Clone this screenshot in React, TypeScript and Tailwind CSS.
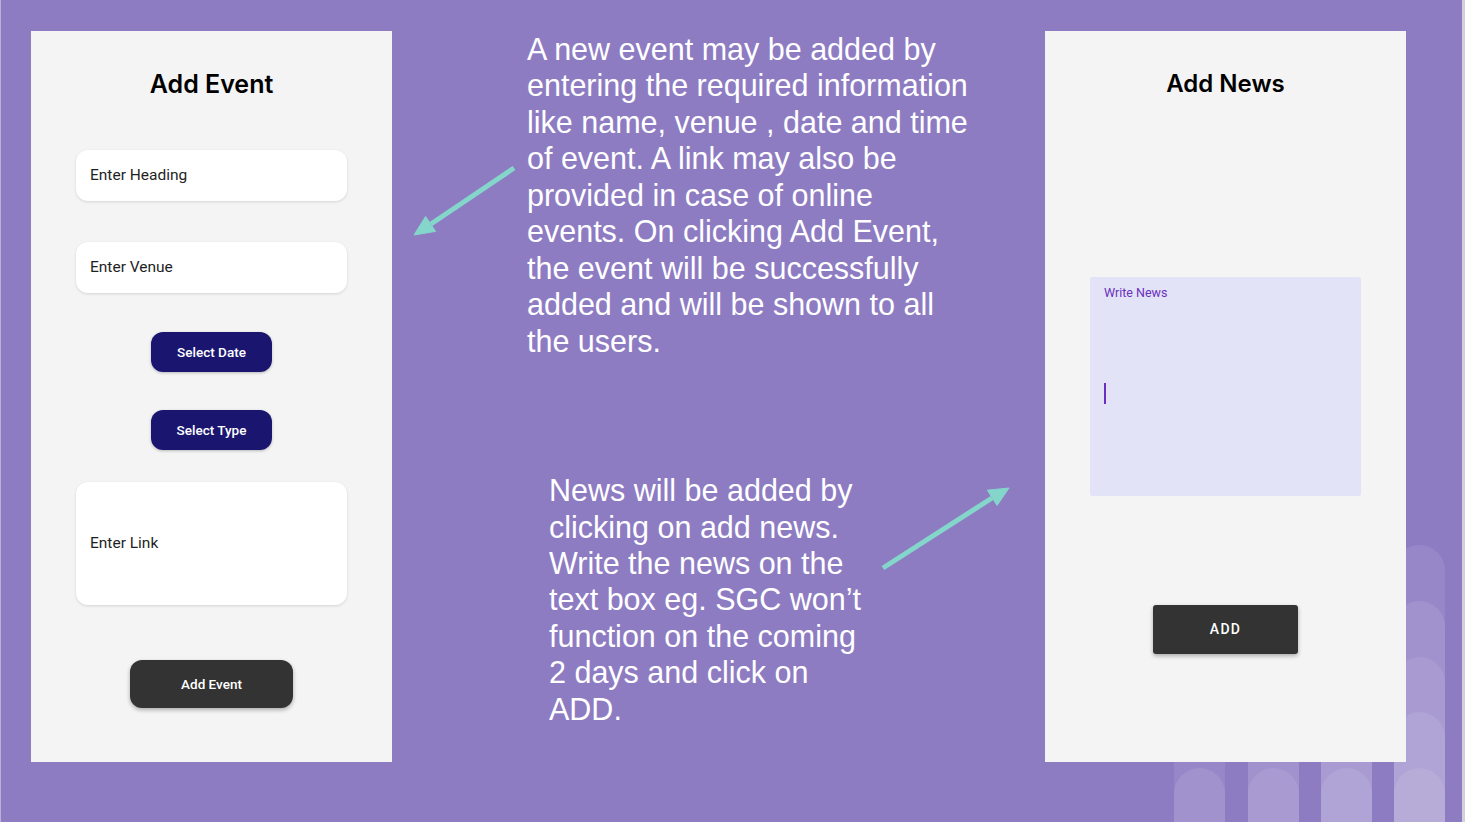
import React from 'react';

const fontUi = { fontFamily: 'Roboto, "Liberation Sans", sans-serif' };

const Field: React.FC<{ label: string; tall?: boolean; className?: string }> = ({ label, tall, className }) => (
  <div
    className={`w-[271px] ${tall ? 'h-[123px]' : 'h-[51px]'} bg-white rounded-[12px] shadow-[0_1px_3px_rgba(0,0,0,0.13)] flex items-center px-[14px] text-[15.5px] text-[#1f1f1f] ${className ?? ''}`}
  >
    {label}
  </div>
);

const NavyButton: React.FC<{ label: string; className?: string }> = ({ label, className }) => (
  <button
    className={`w-[121px] h-[40px] rounded-[12px] bg-[#1a1670] text-white text-[13.5px] font-medium shadow-[0_1px_3px_rgba(0,0,0,0.25)] ${className ?? ''}`}
  >
    {label}
  </button>
);

// decorative stacked pills bottom right, each layer a bit lighter
const Column: React.FC<{ left: number; tops: number[] }> = ({ left, tops }) => (
  <div className="absolute bottom-0" style={{ left, width: 51, top: tops[0] }}>
    {tops.map((t, i) => (
      <div
        key={i}
        className="absolute left-0 right-0 bottom-0 rounded-t-full bg-white/[0.09]"
        style={{ top: t - tops[0] }}
      />
    ))}
  </div>
);

const Arrows: React.FC = () => (
  <svg className="absolute inset-0 pointer-events-none" width="1465" height="822" viewBox="0 0 1465 822">
    <g fill="#84d6cb" stroke="#84d6cb">
      <line x1="513" y1="168" x2="430" y2="224" strokeWidth="5" />
      <polygon points="413,235 434.6,231.4 424.6,216.4" strokeWidth="1" />
      <line x1="882" y1="568" x2="991" y2="498" strokeWidth="5" />
      <polygon points="1008,488 996.1,505.4 986.3,490.2" strokeWidth="1" />
    </g>
  </svg>
);

const App: React.FC = () => {
  const blurb = {
    fontFamily: '"Liberation Sans", Arial, sans-serif',
  };

  return (
    <div className="relative w-[1465px] h-[822px] overflow-hidden bg-[#8e7cc3] border-l border-[#b9afd8]">
      <Column left={1173} tops={[712, 768]} />
      <Column left={1247} tops={[657, 712, 768]} />
      <Column left={1320} tops={[601, 657, 712, 768]} />
      <Column left={1393} tops={[545, 601, 657, 712, 768]} />
      <div className="absolute top-0 bottom-0 right-0 w-[3px] bg-[#d3d0da]" />

      <div className="relative flex pt-[31px] pl-[30px]">
        {/* Add Event screen */}
        <div className="w-[361px] h-[731px] bg-[#f4f4f4] flex flex-col items-center" style={fontUi}>
          <h1
            className="mt-[37px] text-[25px] leading-[32px] font-semibold text-black"
            style={{ fontFamily: 'Inter, Roboto, sans-serif' }}
          >
            Add Event
          </h1>
          <Field label="Enter Heading" className="mt-[50px]" />
          <Field label="Enter Venue" className="mt-[41px]" />
          <NavyButton label="Select Date" className="mt-[39px]" />
          <NavyButton label="Select Type" className="mt-[38px]" />
          <Field label="Enter Link" tall className="mt-[32px]" />
          <button className="mt-[55px] w-[163px] h-[48px] rounded-[12px] bg-[#333333] text-white text-[13.5px] font-medium shadow-[0_2px_4px_rgba(0,0,0,0.3)]">
            Add Event
          </button>
        </div>

        {/* explanation text */}
        <div className="w-[653px] flex flex-col text-white text-[30.5px] leading-[36.45px]" style={blurb}>
          <p className="ml-[135px] mt-0">
            <span className="block whitespace-nowrap">A new event may be added by</span>
            <span className="block whitespace-nowrap">entering the required information</span>
            <span className="block whitespace-nowrap">like name, venue , date and time</span>
            <span className="block whitespace-nowrap">of event. A link may also be</span>
            <span className="block whitespace-nowrap">provided in case of online</span>
            <span className="block whitespace-nowrap">events. On clicking Add Event,</span>
            <span className="block whitespace-nowrap">the event will be successfully</span>
            <span className="block whitespace-nowrap">added and will be shown to all</span>
            <span className="block whitespace-nowrap">the users.</span>
          </p>
          <p className="ml-[157px] mt-[113px]">
            <span className="block whitespace-nowrap">News will be added by</span>
            <span className="block whitespace-nowrap">clicking on add news.</span>
            <span className="block whitespace-nowrap">Write the news on the</span>
            <span className="block whitespace-nowrap">text box eg. SGC won’t</span>
            <span className="block whitespace-nowrap">function on the coming</span>
            <span className="block whitespace-nowrap">2 days and click on</span>
            <span className="block whitespace-nowrap">ADD.</span>
          </p>
        </div>

        {/* Add News screen */}
        <div className="w-[361px] h-[731px] bg-[#f4f4f4] flex flex-col items-center" style={fontUi}>
          <h1
            className="mt-[37px] text-[24px] leading-[32px] font-semibold text-black"
            style={{ fontFamily: 'Inter, Roboto, sans-serif' }}
          >
            Add News
          </h1>
          <div className="mt-[177px] w-[271px] h-[219px] bg-[#e3e3f8] rounded-[2px] px-[14px] pt-[8px] flex flex-col">
            <span className="text-[12.5px] leading-[16px] text-[#6a30bd]">Write News</span>
            <span className="mt-[82px] w-[2px] h-[21px] bg-[#6a2ec0]" />
          </div>
          <button className="mt-[109px] w-[145px] h-[49px] rounded-[3px] bg-[#333333] text-white text-[14px] font-medium tracking-[1.25px] shadow-[0_2px_4px_rgba(0,0,0,0.3)]">
            ADD
          </button>
        </div>
      </div>

      <Arrows />
    </div>
  );
};

export default App;
